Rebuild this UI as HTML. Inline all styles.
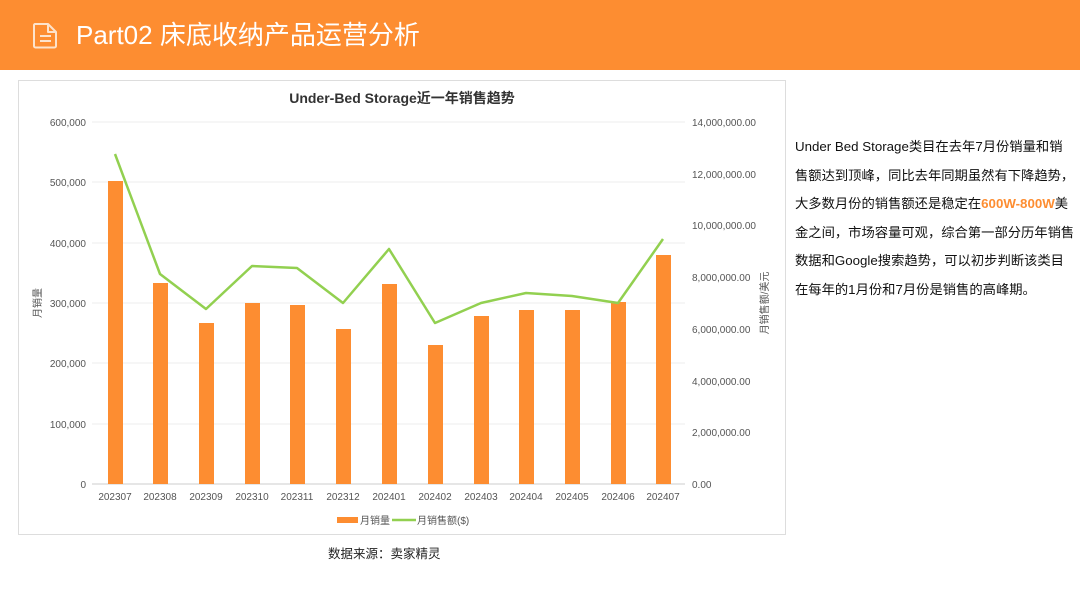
<!DOCTYPE html>
<html><head><meta charset="utf-8"><style>
body{margin:0;width:1080px;height:608px;background:#fff;position:relative;overflow:hidden;font-family:"Liberation Sans","Noto Sans CJK SC",sans-serif}
.hdr{position:absolute;left:0;top:0;width:1080px;height:70px;background:#fd8d31}
.hdr .t{position:absolute;left:76px;top:16px;font-size:26px;color:#fff;line-height:38px}
.box{position:absolute;left:18px;top:80px;width:768px;height:455px;border:1px solid #ddd;box-sizing:border-box}
.txt{position:absolute;left:795px;top:133px;width:280px;font-size:13.3px;line-height:28.5px;color:#111}
.src{position:absolute;left:328px;top:543px;font-size:12.5px;color:#222}
</style></head><body>
<div class="hdr">
<svg style="position:absolute;left:32px;top:22px" width="28" height="27" viewBox="0 0 28 27"><path d="M3 2h13l8 8v14a1.5 1.5 0 0 1-1.5 1.5h-19A1.5 1.5 0 0 1 2 24V3.5A1.5 1.5 0 0 1 3 2z M16 2v8h8" fill="none" stroke="#fde3cc" stroke-width="2" stroke-linejoin="round"/><path d="M8 14h11M8 19h11" stroke="#fde3cc" stroke-width="2"/></svg>
<div class="t">Part02 床底收纳产品运营分析</div></div>
<div class="box"></div>
<svg style="position:absolute;left:0;top:0" width="790" height="540" font-family="Liberation Sans, Noto Sans CJK SC, sans-serif">
<text x="402" y="103" font-size="14" font-weight="bold" text-anchor="middle" fill="#333">Under-Bed Storage近一年销售趋势</text>
<g stroke="#eee" stroke-width="1">
<line x1="92" y1="122" x2="685" y2="122"/><line x1="92" y1="182" x2="685" y2="182"/><line x1="92" y1="243" x2="685" y2="243"/><line x1="92" y1="303" x2="685" y2="303"/><line x1="92" y1="363" x2="685" y2="363"/><line x1="92" y1="424" x2="685" y2="424"/></g>
<line x1="92" y1="484" x2="685" y2="484" stroke="#ccc"/>
<g font-size="10" fill="#555" text-anchor="end">
<text x="86" y="126">600,000</text><text x="86" y="186">500,000</text><text x="86" y="247">400,000</text><text x="86" y="307">300,000</text><text x="86" y="367">200,000</text><text x="86" y="428">100,000</text><text x="86" y="488">0</text></g>
<g font-size="10" fill="#555">
<text x="692" y="126">14,000,000.00</text><text x="692" y="178">12,000,000.00</text><text x="692" y="229">10,000,000.00</text><text x="692" y="281">8,000,000.00</text><text x="692" y="333">6,000,000.00</text><text x="692" y="385">4,000,000.00</text><text x="692" y="436">2,000,000.00</text><text x="692" y="488">0.00</text></g>
<text transform="translate(41,303) rotate(-90)" font-size="10" fill="#555" text-anchor="middle">月销量</text>
<text transform="translate(768,303) rotate(-90)" font-size="10" fill="#555" text-anchor="middle">月销售额/美元</text>
<g fill="#fd8d31">
<rect x="108" y="181" width="15" height="303"/><rect x="153" y="283" width="15" height="201"/><rect x="199" y="323" width="15" height="161"/><rect x="245" y="303" width="15" height="181"/><rect x="290" y="305" width="15" height="179"/><rect x="336" y="329" width="15" height="155"/><rect x="382" y="284" width="15" height="200"/><rect x="428" y="345" width="15" height="139"/><rect x="474" y="316" width="15" height="168"/><rect x="519" y="310" width="15" height="174"/><rect x="565" y="310" width="15" height="174"/><rect x="611" y="302" width="15" height="182"/><rect x="656" y="255" width="15" height="229"/></g>
<polyline fill="none" stroke="#92d050" stroke-width="2.5" stroke-linejoin="round" points="115,154 160,274 206,309 252,266 297,268 343,303 389,249 435,323 481,303 526,293 572,296 618,303 663,239"/>
<g font-size="10" fill="#555" text-anchor="middle">
<text x="115" y="500">202307</text><text x="160" y="500">202308</text><text x="206" y="500">202309</text><text x="252" y="500">202310</text><text x="297" y="500">202311</text><text x="343" y="500">202312</text><text x="389" y="500">202401</text><text x="435" y="500">202402</text><text x="481" y="500">202403</text><text x="526" y="500">202404</text><text x="572" y="500">202405</text><text x="618" y="500">202406</text><text x="663" y="500">202407</text></g>
<rect x="337" y="517" width="21" height="6" fill="#fd8d31"/><text x="360" y="524" font-size="10" fill="#555">月销量</text>
<line x1="392" y1="520" x2="416" y2="520" stroke="#92d050" stroke-width="2.5"/><text x="417" y="524" font-size="10" fill="#555">月销售额($)</text>
</svg>
<div class="src">数据来源：卖家精灵</div>
<div class="txt">Under Bed Storage类目在去年7月份销量和销售额达到顶峰，同比去年同期虽然有下降趋势，大多数月份的销售额还是稳定在<b style="color:#fd8d31">600W-800W</b>美金之间，市场容量可观，综合第一部分历年销售数据和Google搜索趋势，可以初步判断该类目在每年的1月份和7月份是销售的高峰期。</div>
</body></html>
